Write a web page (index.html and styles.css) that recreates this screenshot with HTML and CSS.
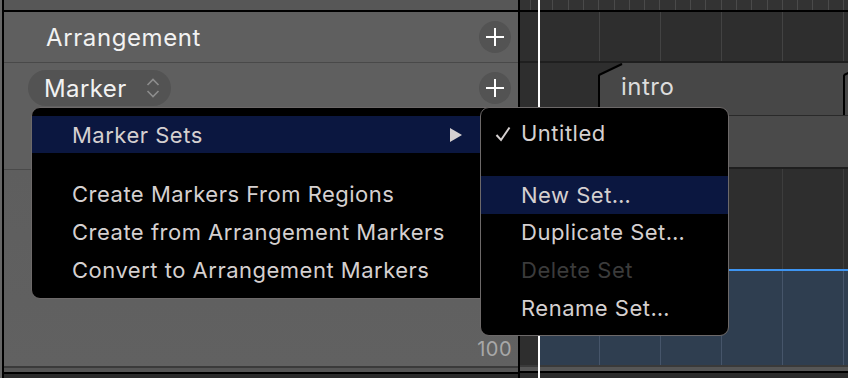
FILE: index.html
```html
<!doctype html>
<html lang="en">

<head>
  <meta charset="UTF-8" />
  <meta name="viewport" content="width=device-width, initial-scale=1.0" />
  <title>Marker Sets</title>
  <link rel="stylesheet" href="styles.css">
</head>

<body>
  <div class="daw">
    <div class="headers">
      <div class="ruler-head"></div>

      <div class="track-head arrangement">
        <span class="track-name">Arrangement</span>
        <span class="add-btn">
          <svg width="18" height="18" viewBox="0 0 18 18"><path d="M9 0v18M0 9h18" stroke="#fff" stroke-width="2" /></svg>
        </span>
      </div>

      <div class="track-head marker">
        <div class="marker-row">
          <span class="pill">Marker
            <svg width="14" height="24" viewBox="0 0 14 24">
              <path d="M1.5 9 7 3.5 12.5 9M1.5 15 7 20.5 12.5 15" fill="none" stroke="#8d8d8d" stroke-width="1.6" />
            </svg>
          </span>
          <span class="add-btn">
            <svg width="18" height="18" viewBox="0 0 18 18"><path d="M9 0v18M0 9h18" stroke="#fff" stroke-width="2" /></svg>
          </span>
        </div>
      </div>

      <div class="track-head tempo">
        <span class="tempo-value">100</span>
      </div>

      <div class="foot"></div>
    </div>

    <div class="lanes">
      <div class="ruler"></div>
      <div class="lane arr-lane"></div>

      <div class="lane marker-lane">
        <div class="mk-top">
          <div class="region">
            <svg class="corner" width="26" height="13" viewBox="0 0 26 13">
              <polygon points="0,0 25,0 0,12" fill="#2e2e2e" />
              <path d="M1 12 24 1" stroke="#000" stroke-width="2" />
            </svg>
            <span>intro</span>
          </div>
          <div class="region next">
            <svg class="corner" width="26" height="13" viewBox="0 0 26 13">
              <polygon points="0,0 25,0 0,12" fill="#474747" />
              <path d="M1 12 24 1" stroke="#000" stroke-width="2" />
            </svg>
          </div>
        </div>
        <div class="mk-bottom">
          <div class="mk-fill"></div>
        </div>
      </div>

      <div class="lane tempo-lane">
        <div class="tempo-fill"></div>
      </div>

      <div class="foot"></div>
      <div class="playhead"></div>
    </div>

    <div class="menu main-menu">
      <div class="menu-item active">
        <span>Marker Sets</span>
        <svg class="arrow" width="12" height="14" viewBox="0 0 12 14"><polygon points="0,0 12,7 0,14" fill="#d5d0d0" /></svg>
      </div>
      <div class="menu-sep"></div>
      <div class="menu-item">Create Markers From Regions</div>
      <div class="menu-item">Create from Arrangement Markers</div>
      <div class="menu-item">Convert to Arrangement Markers</div>
    </div>

    <div class="menu sub-menu">
      <div class="menu-item">
        <svg class="check" width="16" height="16" viewBox="0 0 16 16"><path d="M1.5 9 6 14 14.5 1.5" fill="none" stroke="#d5d0d0" stroke-width="2" /></svg>
        Untitled
      </div>
      <div class="menu-sep"></div>
      <div class="menu-item active">New Set…</div>
      <div class="menu-item">Duplicate Set…</div>
      <div class="menu-item disabled">Delete Set</div>
      <div class="menu-item">Rename Set…</div>
    </div>
  </div>
</body>

</html>
```

FILE: styles.css
```css
* {
  box-sizing: border-box;
}

html,
body {
  margin: 0;
  padding: 0;
  width: 848px;
  height: 378px;
  overflow: hidden;
  font-family: 'Inter', 'Liberation Sans', sans-serif;
  background-color: #5f5f5f;
}

.daw {
  position: relative;
  display: flex;
  width: 848px;
  height: 378px;
  background-color: #666;
}

/* left column: track headers */

.headers {
  display: flex;
  flex-direction: column;
  flex-shrink: 0;
  width: 518px;
  margin-left: 2px;
  border-left: 2px solid #000;
  border-right: 2px solid #000;
  background-color: #5f5f5f;
}

.ruler-head {
  height: 12px;
  background-color: #575757;
  border-bottom: 2px solid #000;
}

.track-head {
  display: flex;
  align-items: center;
  justify-content: space-between;
}

.arrangement {
  height: 51px;
  padding: 0 7px 0 42px;
  border-bottom: 1px solid #494949;
}

.track-name {
  font-size: 24px;
  letter-spacing: 0.6px;
  color: #f2f2f2;
}

.add-btn {
  display: flex;
  align-items: center;
  justify-content: center;
  width: 32px;
  height: 32px;
  border-radius: 50%;
  background-color: #535353;
}

.marker {
  height: 107px;
  align-items: flex-start;
  padding: 7px 7px 0 24px;
  border-bottom: 1px solid #4a4a4a;
}

.marker-row {
  display: flex;
  align-items: center;
  justify-content: space-between;
  width: 100%;
  height: 36px;
}

.pill {
  display: flex;
  align-items: center;
  gap: 19px;
  height: 36px;
  padding: 0 11px 0 16px;
  border-radius: 18px;
  background-color: #535353;
  font-size: 24px;
  letter-spacing: 0.4px;
  color: #f2f2f2;
}

.tempo {
  height: 196px;
  align-items: flex-end;
  justify-content: flex-end;
  padding: 0 6px 5px 0;
  background: linear-gradient(180deg, #5e5e5e, #616161);
}

.tempo-value {
  font-size: 20px;
  letter-spacing: 0.5px;
  color: #a8a8a8;
}

.foot {
  flex: 1;
  border-top: 2px solid #3a3a3a;
  background: linear-gradient(180deg, #565656 0 4px, #000 4px 6px, #2b2b2b 6px);
}

/* right column: lanes */

.lanes {
  position: relative;
  flex: 1;
  min-width: 0;
  overflow: hidden;
  display: flex;
  flex-direction: column;
  background-color: #2e2e2e;
}

.ruler {
  height: 12px;
  border-bottom: 2px solid #000;
  background: #333 repeating-linear-gradient(90deg, transparent 0 14.3px, #4a4a4a 14.3px 15.3px);
  background-position: 18px 0;
}

.lane {
  background-image: repeating-linear-gradient(90deg, transparent 0 60px, #434343 60px 61px);
  background-position: 19px 0;
}

.arr-lane {
  height: 51px;
  border-bottom: 2px solid #1f1f1f;
}

.marker-lane {
  height: 106px;
  display: flex;
  flex-direction: column;
  background-image: none;
  border-bottom: 2px solid #1f1f1f;
}

.mk-top {
  display: flex;
  height: 53px;
  padding-left: 78px;
  border-bottom: 1px solid #2a2a2a;
}

.region {
  position: relative;
  width: 245px;
  flex-shrink: 0;
  padding: 9px 0 0 21px;
  background-color: #474747;
  border-left: 2px solid #000;
  font-size: 24px;
  letter-spacing: 0.5px;
  color: #dcdcdc;
}

.region.next {
  width: 40px;
}

.corner {
  position: absolute;
  top: 0;
  left: -2px;
}

.mk-bottom {
  flex: 1;
  padding-left: 78px;
}

.mk-fill {
  height: 100%;
  background-color: #4a4a4a;
}

.tempo-lane {
  height: 196px;
  padding: 100px 0 0 20px;
  background-image: repeating-linear-gradient(90deg, transparent 0 60px, #3d3d3d 60px 61px);
}

.tempo-fill {
  height: 96px;
  border-top: 2px solid #3e95f2;
  background: #2f3e50 repeating-linear-gradient(90deg, transparent 0 60px, #46556a 60px 61px);
  background-position: -1px 0;
}

.playhead {
  position: absolute;
  top: 0;
  bottom: 0;
  left: 18px;
  width: 2px;
  background-color: #fff;
}

/* pop-up menus */

.menu {
  position: absolute;
  top: 107px;
  display: flex;
  flex-direction: column;
  background-color: #000;
  border: 1px solid #6d6969;
  border-radius: 9px;
  font-size: 22px;
  letter-spacing: 0.5px;
  color: #d5d0d0;
}

.main-menu {
  left: 31px;
  width: 470px;
  height: 192px;
  padding: 8px 0 9px;
}

.sub-menu {
  left: 480px;
  width: 249px;
  height: 229px;
  padding: 7px 0 8px;
}

.menu-item {
  display: flex;
  align-items: center;
  height: 38px;
  padding-left: 40px;
}

.main-menu .menu-item:first-child,
.sub-menu .menu-item:first-child {
  height: 37px;
}

.menu-item.active {
  background-color: #0b1740;
}

.menu-item.disabled {
  color: #3b3b3b;
}

.main-menu .active {
  justify-content: space-between;
  padding-right: 38px;
}

.sub-menu .menu-item {
  position: relative;
}

.check {
  position: absolute;
  left: 14px;
  top: 11px;
}

.menu-sep {
  height: 22px;
}

.sub-menu .menu-sep {
  height: 24px;
}
```
